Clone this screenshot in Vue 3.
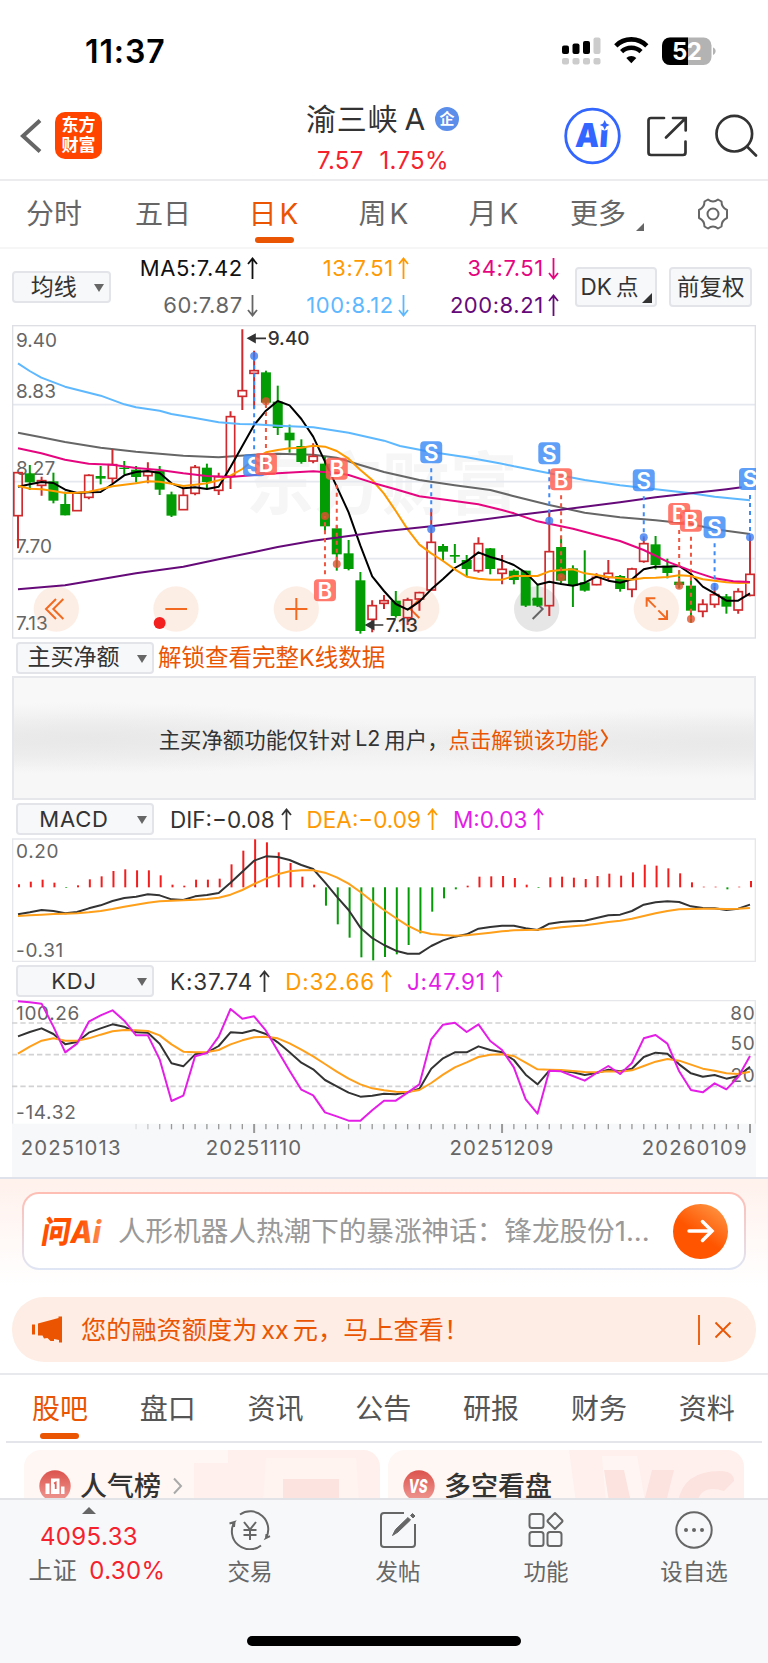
<template>
  <div class="stock-page">
    <div class="status-bar">
      <span class="time">11:37</span>
      <svg class="status-icons" width="160" height="34" viewBox="0 0 160 34">
        <rect x="2" y="11.5" width="7" height="8.5" rx="2" />
        <rect x="12.5" y="9.5" width="7" height="10.5" rx="2" />
        <rect x="23" y="7" width="7" height="13" rx="2" />
        <rect x="33.5" y="3.5" width="7" height="16.5" rx="2" fill="#ccc" />
        <rect v-for="n in 4" :key="n" :x="10.5 * n - 8.5" y="24" width="7" height="6.5" rx="2" fill="#ccc" />
        <path d="M55.8 11.8a22 22 0 0 1 31 0" class="wifi" />
        <path d="M61.6 17.6a14 14 0 0 1 19.4 0" class="wifi" />
        <path d="M71.3 29.2l-5-5.2a7.2 7.2 0 0 1 10 0z" />
        <rect x="102" y="3.5" width="49.5" height="27.5" rx="8" fill="#b3b3b3" />
        <path d="M110 3.5h18V31h-18a8 8 0 0 1-8-8V11.5a8 8 0 0 1 8-8z" />
        <path d="M153 13.5c3.5 1 3.5 6 0 7.5z" fill="#b3b3b3" />
        <text x="112" y="26" class="battery">52</text>
      </svg>
    </div>

    <header class="header">
      <div class="header-left">
        <svg width="24" height="36" viewBox="0 0 24 36" class="stroke back">
          <path d="M20 2.500L3 18l17 15.500" />
        </svg>
        <div class="brand"><span>东方</span><span>财富</span></div>
      </div>
      <div class="title">
        <h1>渝三峡<span>A</span><i>企</i></h1>
        <p><span>7.57</span><span>1.75%</span></p>
      </div>
      <svg class="header-icons stroke" width="204" height="60" viewBox="0 0 204 60">
        <circle cx="28.500" cy="30" r="26.800" stroke="#3366ff" stroke-width="2.800" />
        <text x="13.500" y="41" class="ai-text" textLength="33" lengthAdjust="spacingAndGlyphs" transform="skewX(-4)">Ai</text>
        <circle cx="40.500" cy="18.500" r="6" fill="#fff" stroke="none" />
        <path d="M40.700 14l1.600 3.400 3.300 1.600-3.300 1.600-1.600 3.400-1.600-3.400-3.300-1.600 3.300-1.600z" fill="#3366ff" stroke="none" />
        <path d="M100 12H87q-2.500 0-2.500 2.500v32q0 2.500 2.500 2.500h32q2.500 0 2.500-2.500V35.500M109 12h12.700v12.500M121 12.700L102 31.500" />
        <circle cx="170.300" cy="27.700" r="17.800" />
        <path d="M183.500 41l8.500 8.500" />
      </svg>
    </header>

    <nav class="period-tabs">
      <span v-for="tab in periods" :key="tab" :class="{ active: tab === '日K', mixed: tab.endsWith('K') }">{{ tab }}</span>
      <span class="more">更多<b></b></span>
      <svg width="34" height="34" viewBox="0 0 34 34" class="gear">
        <path d="M12 2.500Q17 6.500 22 2.500L25.500 4.500Q25.500 10.500 31 13V21Q25.500 23.500 25.500 29.500L22 31.500Q17 27.500 12 31.500L8.500 29.500Q8.500 23.500 3 21V13Q8.500 10.500 8.500 4.500Z" />
        <circle cx="17" cy="17" r="5.500" />
      </svg>
    </nav>

    <section class="ma-row">
      <button class="select small">均线<b></b></button>
      <div class="ma-values">
        <span v-for="ma in averages" :key="ma.text" :style="{ color: ma.color }">
          {{ ma.text }}
          <svg width="11" height="23" viewBox="0 0 11 23" class="arrow"><path :d="ma.up ? upPath : downPath" /></svg>
        </span>
      </div>
      <button class="btn dk">DK<em>点</em><b></b></button>
      <button class="btn">前复权</button>
    </section>

    <!-- charts are drawn on a 3x grid, one candle every 35.42 units -->
    <svg class="chart" width="744" height="314" viewBox="36 15 2232 942">
      <text x="738" y="566" class="watermark" textLength="815">东方财富</text>
      <path d="M36 254H2268M36 485H2268M36 716H2268" stroke="#e6e8f0" stroke-width="5" />
      <rect x="38" y="17" width="2228" height="937" fill="none" stroke="#dddfe5" stroke-width="4" />
      <circle v-for="x in [169, 528, 889, 1250, 1969]" :key="x" :cx="x" cy="867" r="68" fill="#fdeade" fill-opacity="0.8" />
      <circle cx="1610" cy="867" r="68" fill="#e6e6e6" />
      <g class="control">
        <path d="M168 837l-30 30 30 30M190 837l-30 30 30 30" />
        <path d="M496 867h65M856 867h66M889 834v66" />
        <path d="M1258 837l-27 30 27 27" />
        <path d="M1598 837l30 30-30 30" stroke="#666" />
        <path d="M1967 862l-27-27m0 25v-25h26M1975 871l26 26m0-26v26h-26" />
      </g>
      <circle cx="479" cy="909" r="18" fill="#f2211f" />
      <g class="axis-label">
        <text x="48" y="82">9.40</text>
        <text x="48" y="233">8.83</text>
        <text x="48" y="466">8.27</text>
        <text x="48" y="698">7.70</text>
        <text x="48" y="930">7.13</text>
      </g>

      <polyline :points="ma60" stroke="#666" class="line" />
      <g v-for="(c, i) in candles" :key="i">
        <template v-if="c[0]">
          <path :d="`M${px(i)} ${c[1]}V${c[2]}M${px(i)} ${c[3]}V${c[4]}`" stroke="#cf2a2d" stroke-width="6" />
          <rect :x="px(i) - 12.500" :y="c[2]" width="25" :height="c[3] - c[2]" fill="none" stroke="#cf2a2d" stroke-width="5" />
        </template>
        <template v-else>
          <path :d="`M${px(i)} ${c[1]}V${c[4]}`" stroke="#049c04" stroke-width="6" />
          <rect :x="px(i) - 15" :y="c[2]" width="30" :height="c[3] - c[2]" fill="#049c04" />
        </template>
      </g>
      <polyline :points="series(ma5)" stroke="#000" class="line" />
      <polyline :points="series(ma13)" stroke="#ff9900" class="line" />
      <polyline :points="ma34" stroke="#e5057f" class="line" />
      <polyline :points="ma100" stroke="#5eb8ff" class="line" />
      <polyline :points="ma200" stroke="#660a7a" class="line" />

      <g v-for="(m, i) in markers" :key="i" :fill="m.type === 'S' ? '#3d8af7' : '#ff5d4d'">
        <line
          :x1="px(m.at)"
          :x2="px(m.at)"
          :y1="m.y + (m.dot > m.y ? 48 : -48)"
          :y2="m.dot"
          :stroke="m.type === 'S' ? '#3d8af7' : '#f2553f'"
          stroke-width="6"
          stroke-dasharray="12 12"
        />
        <circle :cx="px(m.at)" :cy="m.dot" r="12" :fill="m.type === 'S' ? '#3d7cf0' : '#e2512f'" fill-opacity="0.8" />
        <rect :x="px(m.at) - 33" :y="m.y - 33" width="66" height="66" rx="12" fill-opacity="0.82" />
        <text :x="px(m.at)" :y="m.y + 25" class="marker">{{ m.type }}</text>
      </g>
      <g class="price-note">
        <path d="M752 55H798M1106 915H1150" />
        <path d="M745 55l20-11v22zM1099 915l22-12v24z" fill="#333" stroke="none" />
        <text x="803" y="75">9.40</text>
        <text x="1157" y="936">7.13</text>
      </g>
    </svg>

    <div class="indicator-row first">
      <button class="select">主买净额<b></b></button>
      <span class="unlock">解锁查看完整K线数据</span>
    </div>
    <div class="locked">
      主买净额功能仅针对<i>L2</i>用户，<a>点击解锁该功能</a>
      <svg width="9" height="20" viewBox="0 0 9 20"><path d="M1.500 1.500l5.500 8.500-5.500 8.500" /></svg>
    </div>

    <div class="indicator-row">
      <button class="select latin">MACD<b></b></button>
      <span v-for="v in macdValues" :key="v.text" class="value" :style="{ color: v.color }">
        {{ v.text }}<svg width="11" height="23" viewBox="0 0 11 23" class="arrow"><path :d="upPath" /></svg>
      </span>
    </div>
    <svg class="chart" width="744" height="124" viewBox="36 24 2232 372">
      <path d="M38 396V27H2266V396M36 394H2268" fill="none" stroke="#e6e7eb" stroke-width="4" />
      <g class="axis-label wide">
        <text x="48" y="84">0.20</text>
        <text x="48" y="381">-0.31</text>
      </g>
      <path v-for="(b, i) in macd" :key="i" :d="`M${px(i) + 3} 172V${b}`" :stroke="b > 172 ? '#049c04' : '#f21d1d'" stroke-width="6" />
      <polyline :points="series(dif)" stroke="#333" class="line" />
      <polyline :points="series(dea)" stroke="#ff9f1a" class="line" />
    </svg>

    <div class="indicator-row">
      <button class="select latin">KDJ<b></b></button>
      <span v-for="v in kdjValues" :key="v.text" class="value kdj" :style="{ color: v.color }">
        {{ v.text }}<svg width="11" height="23" viewBox="0 0 11 23" class="arrow"><path :d="upPath" /></svg>
      </span>
    </div>
    <svg class="chart" width="744" height="177" viewBox="36 510 2232 531">
      <rect x="36" y="881" width="2232" height="160" fill="#f7f8fa" />
      <path d="M38 881V512H2266V881" fill="none" stroke="#e6e7eb" stroke-width="4" />
      <path d="M36 579H2268M36 674H2268M36 769H2268" stroke="#d2d2d4" stroke-width="5" stroke-dasharray="16 9" />
      <g class="axis-label wide">
        <text x="48" y="569">100.26</text>
        <text x="48" y="867">-14.32</text>
        <text x="2266" y="570" text-anchor="end">80</text>
        <text x="2266" y="660" text-anchor="end">50</text>
        <text x="2266" y="756" text-anchor="end">20</text>
      </g>
      <polyline :points="series(kLine)" stroke="#333" class="line" />
      <polyline :points="series(dLine)" stroke="#ff9f1a" class="line" />
      <polyline :points="series(jLine)" stroke="#e41ee6" class="line" />
      <path v-for="n in 53" :key="n" :d="`M${px(n + 9)} 882V${(n + 9) % 21 === 20 ? 909 : 898}`" stroke="#999" :stroke-width="(n + 9) % 21 === 20 ? 6 : 4" :stroke-opacity="n < 4 ? n * 0.25 : 1" />
      <g class="date-label">
        <text x="62" y="974">20251013</text>
        <text x="762" y="974" text-anchor="middle">20251110</text>
        <text x="1506" y="974" text-anchor="middle">20251209</text>
        <text x="2243" y="974" text-anchor="end">20260109</text>
      </g>
    </svg>

    <section class="ask">
      <div class="ask-box">
        <svg width="66" height="34" viewBox="0 0 66 34" class="ask-logo">
          <defs>
            <linearGradient id="logoFill" x1="0" x2="1">
              <stop offset="0.600" stop-color="#ff5000" />
              <stop offset="1" stop-color="#ff8a4d" />
            </linearGradient>
          </defs>
          <text x="7.500" y="29" fill="url(#logoFill)" transform="skewX(-10)" textLength="59" lengthAdjust="spacingAndGlyphs">问Ai</text>
        </svg>
        <span class="ask-text">人形机器人热潮下的暴涨神话：锋龙股份1...</span>
        <span class="go">
          <svg width="30" height="26" viewBox="0 0 30 26"><path d="M3 13h22M16.500 3.500l9.500 9.500-9.500 9.500" /></svg>
        </span>
      </div>
    </section>

    <div class="notice">
      <svg width="32" height="27" viewBox="0 0 32 27" fill="#eb5502">
        <path d="M0 8.500h3v10H0zM6 7.500L26.500 2V.500H30v26h-3V24l-5-1v2h-3.500l-3-3-3.500.500-1.500-3H6z" />
      </svg>
      <span>您的融资额度为<i>xx</i>元，马上查看！</span>
      <svg class="close" width="34" height="32" viewBox="0 0 34 32"><path d="M1 1v30M17.500 8.500l15 15M32.500 8.500l-15 15" /></svg>
    </div>

    <nav class="content-tabs">
      <span v-for="tab in contentTabs" :key="tab" :class="{ active: tab === '股吧' }">{{ tab }}</span>
    </nav>

    <section class="cards">
      <div class="card">
        <svg class="card-art" width="190" height="52" viewBox="0 0 190 52">
          <path d="M4 13h34V0h152v52H4z" fill="#fff0ed" />
          <path d="M76 8h90l3 44H73z" fill="#fff4f0" />
          <path d="M93 29h56v23H93z" fill="#fce3df" />
        </svg>
        <svg width="32" height="32" viewBox="0 0 32 32" class="card-icon">
          <defs>
            <linearGradient id="iconFill" x1="0" x2="0" y1="0" y2="1">
              <stop offset="0" stop-color="#dc534d" />
              <stop offset="1" stop-color="#f09a94" />
            </linearGradient>
          </defs>
          <circle cx="16" cy="16" r="15.700" fill="url(#iconFill)" />
          <path d="M12 8.500h8.500V24H12zM6.500 13.500h4V24h-4zM22 16.500h3.500V24H22z" fill="#fff" />
          <path d="M15 13.500l1.700-1v6.500" stroke="#e0605a" stroke-width="1.800" fill="none" />
        </svg>
        <strong>人气榜</strong>
        <svg width="10" height="18" viewBox="0 0 10 18" class="chevron"><path d="M1 1.500l7 7.500-7 7.500" /></svg>
      </div>
      <div class="card">
        <svg class="card-art" width="190" height="52" viewBox="0 0 190 52">
          <path d="M15 0h175v52H22z" fill="#fff0ed" />
          <path d="M48 6h35l8 46H52z" fill="#fff6f3" />
          <path d="M50 20h20l7 32H55zM98 20h22l-8 32H90z" fill="#fce3df" />
          <path d="M124 52q5-31 42-31 14 0 14 10l-10 10q-22-7-27 11z" fill="#fce3df" />
        </svg>
        <svg width="32" height="32" viewBox="0 0 32 32" class="card-icon">
          <circle cx="16" cy="16" r="15.700" fill="url(#iconFill)" />
          <text x="5.500" y="23" class="vs" textLength="19" lengthAdjust="spacingAndGlyphs">VS</text>
        </svg>
        <strong>多空看盘</strong>
      </div>
    </section>

    <footer class="bottom-bar">
      <div class="index">
        <b></b>
        <span class="red">4095.33</span>
        <p>上证<span class="red">0.30%</span></p>
      </div>
      <div class="action">
        <svg width="44" height="40" viewBox="0 0 44 40">
          <path d="M12 4.500A18 18 0 0 1 38 28l4-1.800M38 28l.500-4M33 35.500A18 18 0 0 1 6.500 12l-5 1.500M6.500 12L6 17" />
          <path d="M16 12l6 7.500 6-7.500M15.500 20h13M15.500 25h13M22 20v10" />
        </svg>
        <span>交易</span>
      </div>
      <div class="action">
        <svg width="40" height="40" viewBox="0 0 40 40">
          <path d="M26 3H6Q3 3 3 6v28q0 3 3 3h28q3 0 3-3V14" />
          <path d="M14.500 25.500l3-6L30 7.500l2.500 2.500L20 22zM32.500 5.500l2-2 2.500 2.500-2 2z" fill="#666" stroke-width="1" />
        </svg>
        <span>发帖</span>
      </div>
      <div class="action">
        <svg width="40" height="40" viewBox="0 0 40 40">
          <rect x="3.500" y="4" width="14" height="14" rx="2.500" />
          <rect x="3.500" y="22" width="14" height="14" rx="2.500" />
          <rect x="21.500" y="22" width="14" height="14" rx="2.500" />
          <path d="M29 3l7 7q1 1 0 2l-7 7-7-7q-1-1 0-2z" stroke-linejoin="round" />
        </svg>
        <span>功能</span>
      </div>
      <div class="action">
        <svg width="40" height="40" viewBox="0 0 40 40">
          <circle cx="20" cy="20" r="17.700" />
          <path d="M12 20h.010M20 20h.010M28 20h.010" stroke-width="4" stroke-linecap="round" />
        </svg>
        <span>设自选</span>
      </div>
      <div class="home-indicator"></div>
    </footer>
  </div>
</template>

<script setup>
const periods = ['分时', '五日', '日K', '周K', '月K']
const contentTabs = ['股吧', '盘口', '资讯', '公告', '研报', '财务', '资料']

const upPath = 'M5.500 22V1.500M1 7l4.500-5.500L10 7'
const downPath = 'M5.500 1v20.500M1 16l4.500 5.500L10 16'

const averages = [
  { text: 'MA5:7.42', color: '#111', up: true },
  { text: '13:7.51', color: '#ff9900', up: true },
  { text: '34:7.51', color: '#e5057f', up: false },
  { text: '60:7.87', color: '#666', up: false },
  { text: '100:8.12', color: '#5eb8ff', up: false },
  { text: '200:8.21', color: '#660a7a', up: true }
]
const macdValues = [
  { text: 'DIF:−0.08', color: '#333' },
  { text: 'DEA:−0.09', color: '#ff9900' },
  { text: 'M:0.03', color: '#e41ee6' }
]
const kdjValues = [
  { text: 'K:37.74', color: '#333' },
  { text: 'D:32.66', color: '#ff9900' },
  { text: 'J:47.91', color: '#e41ee6' }
]

// [rising, high, body top, body bottom, low]
const candles = [
  [1, 458, 458, 587, 685], [0, 435, 460, 487, 510], [1, 470, 482, 496, 527], [0, 458, 484, 542, 550],
  [0, 515, 552, 586, 586], [1, 518, 518, 572, 572], [1, 463, 466, 532, 538], [0, 438, 468, 476, 493],
  [1, 388, 434, 475, 490], [0, 423, 443, 447, 463], [0, 438, 449, 471, 487], [1, 427, 455, 467, 490],
  [0, 438, 452, 509, 525], [0, 515, 523, 587, 591], [1, 505, 526, 569, 569], [1, 435, 442, 520, 526],
  [0, 431, 443, 486, 505], [1, 458, 470, 511, 525], [1, 274, 290, 468, 507], [1, 28, 212, 229, 270],
  [1, 92, 152, 160, 265], [0, 152, 157, 248, 262], [0, 197, 245, 324, 345], [0, 314, 338, 361, 398],
  [0, 358, 378, 426, 431], [1, 370, 409, 423, 430], [0, 410, 431, 619, 638], [0, 616, 625, 703, 752],
  [0, 660, 700, 747, 751], [0, 756, 781, 933, 941], [1, 841, 857, 898, 937], [1, 825, 842, 850, 867],
  [0, 813, 842, 888, 893], [1, 833, 840, 893, 915], [1, 815, 818, 837, 872], [1, 568, 667, 810, 810],
  [0, 672, 678, 695, 722], [0, 672, 705, 710, 729], [0, 705, 720, 747, 768], [1, 652, 671, 752, 758],
  [0, 684, 685, 747, 763], [1, 705, 748, 760, 793], [0, 748, 752, 780, 793], [0, 752, 752, 857, 861],
  [0, 793, 833, 857, 861], [1, 573, 695, 857, 888], [0, 648, 681, 782, 790], [0, 736, 745, 798, 861],
  [0, 691, 787, 812, 815], [1, 760, 772, 794, 796], [1, 720, 760, 772, 780], [0, 765, 768, 807, 815],
  [1, 743, 747, 808, 832], [1, 652, 671, 724, 728], [0, 648, 673, 735, 748], [0, 716, 737, 759, 775],
  [0, 752, 785, 795, 805], [0, 773, 797, 872, 908], [1, 838, 853, 874, 892], [1, 800, 824, 853, 863],
  [0, 822, 829, 860, 881], [1, 805, 815, 870, 881], [1, 648, 763, 826, 829]
]

const ma5 = [
  500, 493, 486, 489, 509, 519, 517, 516, 492, 466, 456, 453, 459, 490, 505, 502, 507, 500, 441, 378, 315,
  272, 243, 256, 297, 350, 425, 500, 577, 677, 769, 813, 852, 869, 845, 808, 777, 744, 724, 697, 711, 721,
  735, 758, 794, 785, 792, 797, 788, 770, 782, 788, 778, 748, 740, 740, 738, 762, 800, 820, 842, 842, 820
]
const ma13 = [
  497, 506, 508, 513, 519, 518, 515, 508, 499, 494, 490, 484, 485, 491, 498, 494, 490, 481, 467, 447, 418,
  397, 390, 385, 383, 377, 380, 393, 416, 450, 480, 521, 573, 628, 674, 700, 723, 748, 770, 776, 779, 779,
  768, 768, 768, 754, 750, 748, 760, 765, 771, 775, 779, 774, 773, 771, 766, 768, 778, 782, 787, 789, 788
]
const ma34 = '54,385 124,400 195,419 266,431 337,434 408,444 479,450 550,460 620,468 691,471 763,465 833,460 940,454 1010,459 1046,465 1117,488 1187,508 1258,529 1364,543 1435,553 1506,570 1542,580 1612,604 1719,626 1790,645 1860,663 1931,690 2002,725 2073,752 2144,775 2200,784 2250,786'
const ma60 = '54,338 124,352 195,366 302,383 408,395 550,407 656,412 763,404 833,401 940,404 1010,413 1081,435 1152,456 1258,480 1364,496 1471,510 1536,527 1648,555 1754,578 1860,592 1967,601 2073,612 2144,628 2250,642'
const ma100 = '54,130 89,153 124,173 195,200 302,227 373,253 408,262 479,272 514,282 585,294 656,307 720,312 763,313 833,317 940,322 1046,338 1152,362 1200,378 1294,396 1400,412 1506,431 1542,439 1648,460 1754,480 1860,496 1967,508 2073,520 2144,530 2250,541'
const ma200 = '54,808 195,796 302,778 408,760 550,740 656,718 763,696 833,681 940,662 1046,648 1152,634 1294,619 1400,605 1536,587 1648,574 1754,560 1860,547 1967,532 2073,520 2180,508 2225,502'

const markers = [
  { type: 'S', at: 20, y: 436, dot: 108 },
  { type: 'B', at: 21, y: 432, dot: 244 },
  { type: 'B', at: 26, y: 811, dot: 588 },
  { type: 'B', at: 27, y: 446, dot: 732 },
  { type: 'S', at: 35, y: 397, dot: 628 },
  { type: 'S', at: 45, y: 400, dot: 602 },
  { type: 'B', at: 46, y: 478, dot: 772 },
  { type: 'S', at: 53, y: 481, dot: 652 },
  { type: 'B', at: 56, y: 582, dot: 797 },
  { type: 'B', at: 57, y: 602, dot: 897 },
  { type: 'S', at: 59, y: 622, dot: 800 },
  { type: 'S', at: 62, y: 477, dot: 652 }
]

const macd = [
  163, 155, 149, 158, 174, 166, 148, 139, 123, 118, 121, 121, 136, 164, 167, 149, 149, 146, 103, 62, 28,
  37, 67, 99, 140, 164, 227, 283, 323, 382, 391, 381, 373, 345, 310, 245, 205, 178, 167, 140, 139, 138,
  144, 164, 174, 142, 140, 143, 147, 138, 131, 137, 127, 104, 107, 115, 130, 157, 170, 170, 178, 170, 153
]
const dif = [
  253, 247, 240, 243, 250, 246, 235, 226, 213, 204, 200, 193, 196, 208, 210, 199, 195, 189, 158, 125, 92,
  79, 81, 90, 105, 117, 157, 200, 240, 293, 324, 345, 362, 371, 371, 348, 331, 320, 313, 296, 291, 287,
  287, 295, 300, 281, 276, 274, 272, 264, 256, 254, 243, 224, 217, 214, 216, 229, 234, 235, 240, 236, 224
]
const dea = [
  258, 256, 254, 252, 251, 250, 247, 243, 237, 230, 224, 218, 214, 212, 211, 209, 207, 203, 194, 180, 162,
  146, 133, 124, 121, 121, 128, 142, 161, 186, 214, 240, 264, 287, 304, 312, 315, 317, 316, 312, 308, 304,
  301, 300, 299, 296, 292, 289, 286, 281, 276, 272, 266, 258, 250, 243, 238, 237, 236, 236, 237, 236, 234
]

const kLine = [
  619, 606, 595, 612, 643, 636, 608, 595, 583, 590, 607, 608, 641, 700, 709, 673, 668, 648, 607, 609, 600,
  612, 637, 667, 698, 718, 750, 769, 788, 800, 797, 791, 793, 787, 776, 716, 685, 667, 667, 649, 660, 667,
  690, 734, 763, 722, 722, 727, 735, 729, 719, 724, 716, 681, 668, 671, 703, 730, 740, 735, 746, 738, 710
]
const dLine = [
  671, 650, 632, 625, 632, 632, 625, 614, 604, 600, 601, 603, 616, 643, 665, 667, 666, 660, 643, 631, 622,
  620, 625, 640, 659, 679, 702, 725, 746, 763, 775, 781, 785, 786, 780, 759, 734, 712, 697, 681, 674, 673,
  678, 698, 718, 719, 720, 723, 726, 727, 724, 725, 721, 708, 695, 687, 692, 704, 716, 722, 730, 732, 725
]
const jLine = [
  514, 517, 521, 590, 667, 641, 575, 556, 541, 572, 616, 616, 688, 813, 797, 679, 669, 620, 537, 566, 559,
  602, 662, 722, 779, 796, 847, 859, 872, 872, 841, 812, 812, 788, 763, 628, 584, 578, 606, 583, 633, 660,
  712, 808, 851, 722, 724, 738, 752, 729, 708, 732, 699, 625, 615, 641, 724, 780, 787, 760, 778, 741, 678
]

function px(i) {
  return Math.round((54 + i * 35.42) * 10) / 10
}

function series(values) {
  return values.map((y, i) => `${px(i)},${y}`).join(' ')
}
</script>

<style>
body {
  margin: 0;
}
</style>

<style scoped>
.stock-page {
  width: 768px;
  height: 1663px;
  display: flex;
  flex-direction: column;
  overflow: hidden;
  background: #fff;
  color: #333;
  font-family: Inter, "Noto Sans CJK SC", sans-serif;
}

.stock-page * {
  box-sizing: border-box;
}

.stock-page > * {
  flex-shrink: 0;
}

button {
  font: inherit;
  color: inherit;
  padding: 0;
}

i,
em {
  font-style: normal;
}

.status-bar {
  height: 90px;
  padding: 31px 48px 0 85px;
  display: flex;
  justify-content: space-between;
}

.time {
  margin-top: 1px;
  font-size: 32px;
  line-height: 40px;
  font-weight: 600;
  color: #000;
  letter-spacing: 0.9px;
}

.status-icons {
  margin-top: 3px;
}

.wifi {
  fill: none;
  stroke: #000;
  stroke-width: 4.6;
}

.battery {
  font-size: 24px;
  font-weight: 700;
  fill: #fff;
  letter-spacing: -0.5px;
}

.header {
  height: 91px;
  border-bottom: 2px solid #ececee;
  display: grid;
  grid-template-columns: 240px 1fr 204px;
}

.stroke {
  fill: none;
  stroke: #333;
  stroke-width: 2.7;
  stroke-linecap: round;
}

.back {
  stroke: #666;
  stroke-width: 4;
  stroke-linecap: butt;
}

.header-left {
  display: flex;
  padding-left: 20px;
}

.header-left svg {
  margin: 28px 11px 0 0;
}

.brand {
  width: 47px;
  height: 47px;
  margin-top: 22px;
  padding-top: 3px;
  border-radius: 10px;
  background: #ff4400;
  color: #fff;
  font-size: 17px;
  font-weight: 700;
  line-height: 20px;
  display: flex;
  flex-direction: column;
  align-items: center;
}

.title h1 {
  display: flex;
  align-items: center;
  margin: 10px 0 0 66px;
  font-size: 30px;
  line-height: 38px;
  font-weight: 400;
  letter-spacing: 0.8px;
}

.title h1 span {
  margin-left: 6px;
  font-size: 30px;
}

.title i {
  width: 24px;
  height: 24px;
  margin-left: 9px;
  border-radius: 50%;
  background: #5b8deb;
  color: #fff;
  font-size: 15px;
  line-height: 23px;
  text-align: center;
  letter-spacing: 0;
  font-weight: 700;
}

.title p {
  display: flex;
  gap: 16px;
  margin: 8px 0 0 77px;
  font-size: 24px;
  line-height: 30px;
  letter-spacing: 0.3px;
  color: #f5222d;
}

.header-icons {
  margin-top: 16px;
}

.ai-text {
  font-size: 33px;
  font-weight: 900;
  fill: #3366ff;
  stroke: none;
}

.period-tabs {
  height: 68px;
  border-bottom: 2px solid #f6f6f7;
  display: grid;
  grid-template-columns: 108px 110px 114px 106px 114px 106px 110px;
  justify-items: center;
  align-items: center;
  font-size: 28px;
  color: #666;
}

.period-tabs span,
.content-tabs span {
  position: relative;
  line-height: 40px;
}

.period-tabs .mixed {
  letter-spacing: 3px;
}

.period-tabs .more {
  margin-right: 14px;
}

.more b {
  position: absolute;
  right: -18px;
  bottom: 3px;
  border: 4px solid transparent;
  border-right-color: #666;
  border-bottom-color: #666;
}

.active {
  color: #ea5504;
}

.active::after {
  content: "";
  position: absolute;
  left: 50%;
  bottom: -9px;
  width: 39px;
  height: 6px;
  margin-left: -19.5px;
  border-radius: 3px;
  background: #ea5504;
}

.gear {
  fill: none;
  stroke: #666;
  stroke-width: 2;
  stroke-linejoin: round;
}

.ma-row {
  height: 76px;
  padding: 0 16px 0 12px;
  display: flex;
  align-items: center;
  font-size: 22px;
}

.select {
  width: 138px;
  height: 32px;
  padding-right: 23px;
  border: 2px solid #e2e4e9;
  border-radius: 4px;
  background: #f7f8fa;
  font-size: 23px;
  line-height: 27px;
  position: relative;
}

.select.small {
  width: 99px;
  padding-right: 15px;
}

.select.latin {
  font-size: 22px;
  line-height: 28px;
  padding-right: 22px;
  letter-spacing: 0.8px;
}

.select b {
  position: absolute;
  right: 5px;
  top: 11px;
  border: solid transparent;
  border-width: 8px 5px 0;
  border-top-color: #666;
}

.ma-values {
  width: 448px;
  display: grid;
  grid-template-columns: 147.5px 151px 150px;
  row-gap: 10px;
  margin-top: -1px;
}

.ma-values span {
  display: flex;
  justify-content: flex-end;
  align-items: center;
  gap: 4.5px;
  line-height: 27px;
  letter-spacing: 0.55px;
}

.arrow path {
  fill: none;
  stroke: currentColor;
  stroke-width: 1.8;
}

.btn {
  width: 83px;
  height: 40px;
  margin-left: 12px;
  border: 2px solid #e2e4e9;
  border-radius: 4px;
  background: #f7f8fa;
  font-size: 22.5px;
  line-height: 36px;
  position: relative;
  white-space: nowrap;
}

.btn.dk {
  margin-left: 16px;
  padding-right: 13px;
}

.dk em {
  margin-left: 4px;
}

.dk b {
  position: absolute;
  right: 3px;
  bottom: 2px;
  border: 5.5px solid transparent;
  border-right-color: #333;
  border-bottom-color: #333;
}

.chart {
  display: block;
  margin: 0 12px;
}

.chart .line {
  fill: none;
  stroke-width: 6;
  stroke-linejoin: round;
}

.watermark {
  font-size: 204px;
  font-weight: 700;
  fill: #f6f6f6;
}

.axis-label {
  font-size: 57px;
  fill: #666;
}

.axis-label.wide {
  letter-spacing: 2px;
}

.date-label {
  font-size: 61px;
  letter-spacing: 3.4px;
  fill: #666;
}

.control path {
  fill: none;
  stroke: #f26a21;
  stroke-width: 6;
}

.control path[stroke] {
  stroke: #666;
}

.marker {
  font-size: 67px;
  font-weight: 600;
  fill: #fff;
  text-anchor: middle;
}

.price-note {
  font-size: 57px;
  fill: #333;
  font-weight: 500;
}

.price-note path {
  stroke: #333;
  stroke-width: 5;
}

.indicator-row {
  height: 38px;
  padding-left: 16px;
  display: flex;
  align-items: center;
}

.indicator-row.first {
  height: 37px;
}

.unlock {
  margin: -3px 0 0 4px;
  font-size: 23.5px;
  color: #ea5504;
}

.value {
  display: flex;
  align-items: center;
  gap: 6px;
  margin-left: 15px;
  font-size: 22.5px;
}

.select + .value {
  margin-left: 16px;
}

.value.kdj {
  letter-spacing: 0.8px;
}

.locked {
  height: 124px;
  margin: 0 12px;
  border: 2px solid #e6e7eb;
  display: flex;
  align-items: center;
  justify-content: center;
  font-size: 21.4px;
  background:
    radial-gradient(ellipse 42% 30% at 10% 50%, #e8e8e8, transparent),
    radial-gradient(ellipse 42% 30% at 95% 54%, #e9e9e9, transparent),
    linear-gradient(#f8f8f8 30%, #eeeeee 54%, #f7f7f7 78%);
}

.locked i {
  margin: 0 4px;
}

.locked a {
  color: #ea5504;
}

.locked svg {
  margin-left: 2px;
  fill: none;
  stroke: #ea5504;
  stroke-width: 2;
}

.ask {
  height: 120px;
  padding: 13px 22px 0;
  border-top: 2px solid #dfe2ea;
  background: linear-gradient(#fff1ec, #fff 90%);
}

.ask-box {
  height: 78px;
  padding: 0 16px 0 14px;
  display: flex;
  align-items: center;
  border: 2px solid transparent;
  border-radius: 17px;
  background:
    linear-gradient(#fff, #fff) padding-box,
    linear-gradient(#ffbdb3, #dfe6f5) border-box;
}

.ask-logo {
  overflow: visible;
}

.ask-logo text {
  font-size: 31px;
  font-weight: 800;
}

.ask-text {
  flex: 1;
  margin: -4px 0 0 14px;
  font-size: 27.6px;
  color: #999;
  white-space: nowrap;
}

.go {
  width: 55px;
  height: 55px;
  border-radius: 50%;
  background: linear-gradient(35deg, #ff5500 45%, #ff9240 90%);
  display: flex;
  align-items: center;
  justify-content: center;
}

.go path {
  fill: none;
  stroke: #fff;
  stroke-width: 3.5;
  stroke-linecap: round;
}

.notice {
  height: 65px;
  margin: 0 12px 11px;
  padding: 0 24px 0 20px;
  border-radius: 32px;
  background: #feede4;
  display: flex;
  align-items: center;
  font-size: 25.2px;
  color: #ea5504;
}

.notice span {
  flex: 1;
  margin: -3px 0 0 17px;
}

.notice i {
  margin: 0 4px;
}

.close path {
  stroke: #ea5504;
  stroke-width: 1.8;
}

.content-tabs {
  height: 70px;
  padding: 0 6px;
  border-top: 2px solid #e8e9ed;
  display: grid;
  grid-template-columns: repeat(7, 107.8px);
  justify-items: center;
  align-items: center;
  font-size: 28px;
  color: #555;
  background: linear-gradient(#e3e5ea, #e3e5ea) 6px 100% / 756px 2px no-repeat;
}

.content-tabs .active::after {
  bottom: -10px;
}

.cards {
  height: 55px;
  padding: 7px 24px 0;
  display: flex;
  gap: 8px;
}

.card {
  width: 356px;
  height: 80px;
  padding: 20px 0 0 15px;
  border-radius: 17px;
  overflow: hidden;
  background: #fff7f4;
  display: flex;
  position: relative;
}

.card-art {
  position: absolute;
  right: 0;
  top: 0;
}

.card strong {
  margin-left: 9px;
  font-size: 27px;
  line-height: 34px;
  font-weight: 500;
  position: relative;
}

.chevron {
  margin: 7px 0 0 12px;
  fill: none;
  stroke: #aaa;
  stroke-width: 2;
}

.vs {
  font-size: 19px;
  font-weight: 800;
  font-style: italic;
  fill: #fff;
}

.bottom-bar {
  height: 165px;
  border-top: 2px solid #e2e3e7;
  background: #f7f8fa;
  display: grid;
  grid-template-columns: 176px repeat(4, 148px);
  grid-template-rows: 136px 10px;
  justify-items: center;
  color: #666;
  position: relative;
}

.index {
  display: flex;
  flex-direction: column;
  align-items: center;
  padding: 7px 0 0 10px;
  font-size: 24px;
  line-height: 34px;
  letter-spacing: 0.4px;
}

.index b {
  border: solid transparent;
  border-width: 0 7px 7px;
  border-bottom-color: #666;
  margin: 0 8px 6px 0;
}

.index > span {
  margin-right: 8px;
}

.index p {
  display: flex;
  gap: 12px;
  margin: 0 0 0 8px;
}

.red {
  color: #f5222d;
}

.action {
  display: flex;
  flex-direction: column;
  align-items: center;
  padding-top: 10px;
  font-size: 22.5px;
  line-height: 32px;
}

.action span {
  margin-top: 6px;
}

.action svg {
  fill: none;
  stroke: #666;
  stroke-width: 2;
}

.home-indicator {
  grid-column: 1 / -1;
  width: 274px;
  height: 10px;
  border-radius: 5px;
  background: #000;
}
</style>
